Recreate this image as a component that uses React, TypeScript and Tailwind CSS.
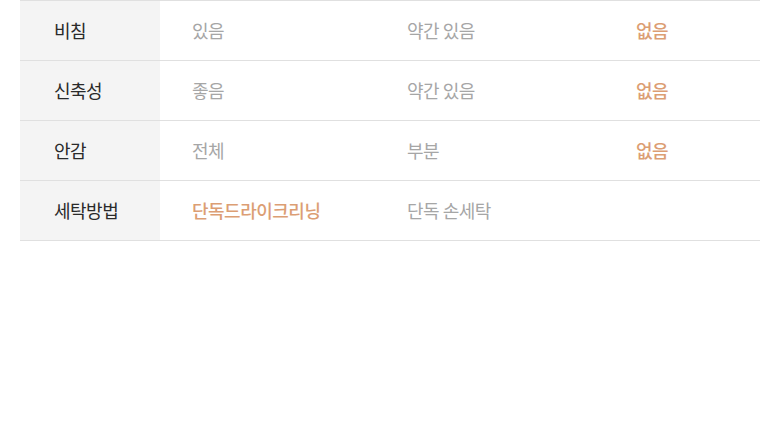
const rows: Array<{ label: string; values: Array<{ text: string; on?: boolean }> }> = [
  {
    label: '비침',
    values: [{ text: '있음' }, { text: '약간 있음' }, { text: '없음', on: true }],
  },
  {
    label: '신축성',
    values: [{ text: '좋음' }, { text: '약간 있음' }, { text: '없음', on: true }],
  },
  {
    label: '안감',
    values: [{ text: '전체' }, { text: '부분' }, { text: '없음', on: true }],
  },
  {
    label: '세탁방법',
    values: [{ text: '단독드라이크리닝', on: true }, { text: '단독 손세탁' }, { text: '' }],
  },
];

const colWidths = ['w-[215px]', 'w-[229px]', 'flex-1'];

export default function App() {
  return (
    <div
      className="w-[780px] h-[440px] bg-white px-5"
      style={{ fontFamily: '"Noto Sans CJK KR", "Noto Sans", sans-serif' }}
    >
      <div className="border-t border-[#e0e0e0]">
        {rows.map((row) => (
          <div key={row.label} className="flex h-[60px] border-b border-[#e0e0e0]">
            <div className="w-[140px] bg-[#f4f4f4] pl-[34px] flex items-center text-[18px] tracking-[-0.5px] text-[#2a2a2a]">
              {row.label}
            </div>
            {row.values.map((v, i) => (
              <div
                key={i}
                className={`${colWidths[i]} pl-8 flex items-center text-[18px] tracking-[-0.5px] ${
                  v.on ? 'text-[#dc9e74] font-medium' : 'text-[#a6a6a6]'
                }`}
              >
                {v.text}
              </div>
            ))}
          </div>
        ))}
      </div>
    </div>
  );
}
